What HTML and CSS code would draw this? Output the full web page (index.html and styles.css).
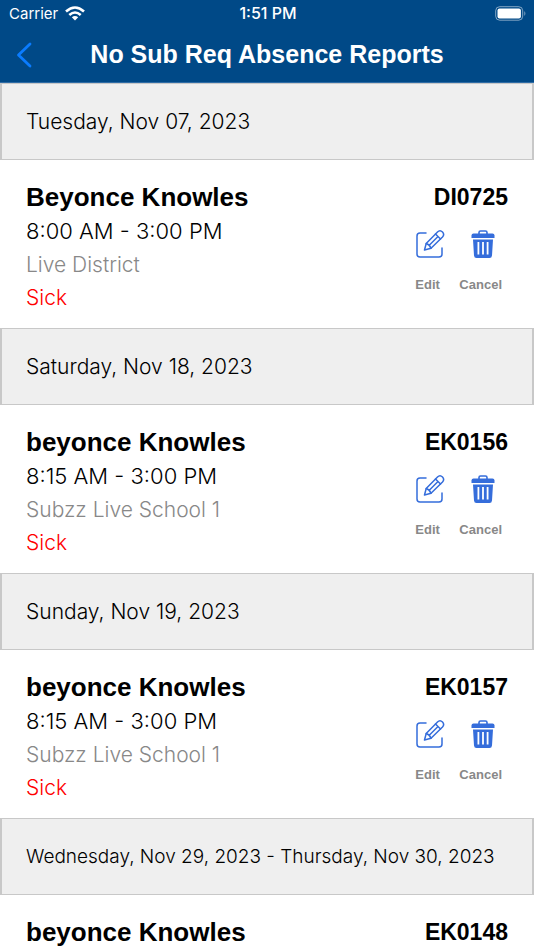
FILE: index.html
```html
<!DOCTYPE html>
<html lang="en">
<head>
<meta charset="utf-8">
<meta name="viewport" content="width=device-width, initial-scale=1">
<title>No Sub Req Absence Reports</title>
<link rel="stylesheet" href="styles.css">
</head>
<body>
<svg class="defs" aria-hidden="true">
  <symbol id="edit" viewBox="0 0 30 30">
    <g fill="none" stroke="currentColor" stroke-width="1.5" stroke-linecap="round" stroke-linejoin="round">
      <path d="M11 4H5Q2 4 2 7V25Q2 28 5 28H24Q27 28 27 25V19"/>
      <path d="M9.500 21L11.200 14.500L22.500 3Q25 .500 27.500 3Q29.800 5.500 27.500 8L16 19.300Z"/>
      <path d="M11.200 14.500Q14.500 15.500 16 19.300M20.500 5L25.500 10M14 16.500L22.500 8"/>
    </g>
  </symbol>
  <symbol id="trash" viewBox="-4 0 28 28">
    <path fill="none" stroke="currentColor" stroke-width="1.600" d="M8 4.500V2.500Q8 1 9.500 1H14.500Q16 1 16 2.500V4.500"/>
    <path fill="currentColor" d="M2.500 3.500H21.500Q23.500 3.500 23.500 5.500V8H.500V5.500Q.500 3.500 2.500 3.500Z"/>
    <path fill="currentColor" fill-rule="evenodd" d="M2 9.500H22L21 25.500Q20.800 28 18.500 28H5.500Q3.200 28 3 25.500ZM6.500 12V24.500H8.300V12ZM11.100 12V24.500H12.900V12ZM15.700 12V24.500H17.500V12Z"/>
  </symbol>
</svg>
<header class="top">
  <div class="status">
    <span class="carrier">Carrier
      <svg class="wifi" viewBox="0 0 20 15" aria-hidden="true"><g fill="none" stroke="#fff" stroke-width="2.600"><path d="M1 5.500Q10-2.500 19 5.500"/><path d="M4.300 9Q10 4 15.700 9"/></g><path fill="#fff" d="M6.800 11.300Q10 8.700 13.200 11.300L10 14.500Z"/></svg>
    </span>
    <span class="clock">1:51 PM</span>
    <svg class="battery" viewBox="0 0 32 15" aria-hidden="true"><rect x=".7" y=".7" width="27" height="13.500" rx="4" fill="none" stroke="#fff" stroke-opacity=".5"/><rect x="2.500" y="2.500" width="23.400" height="10" rx="2" fill="#fff"/><path d="M29.300 5Q31.500 7.500 29.300 10Z" fill="#fff" fill-opacity=".5"/></svg>
  </div>
  <div class="nav">
    <button class="back" type="button" aria-label="Back"><svg viewBox="0 0 16 26" aria-hidden="true"><path d="M14 2L2.500 13L14 24" fill="none" stroke="currentColor" stroke-width="2.800" stroke-linecap="round" stroke-linejoin="round"/></svg></button>
    <h1>No Sub Req Absence Reports</h1>
  </div>
</header>
<main>
  <section>
    <h2>Tuesday, Nov 07, 2023</h2>
    <article>
      <div class="info"><h3>Beyonce Knowles</h3><p class="time">8:00 AM - 3:00 PM</p><p class="place">Live District</p><p class="reason">Sick</p></div>
      <div class="side"><strong>DI0725</strong><div class="actions"><button type="button"><svg class="edit"><use href="#edit"/></svg>Edit</button><button type="button"><svg class="trash"><use href="#trash"/></svg>Cancel</button></div></div>
    </article>
  </section>
  <section>
    <h2>Saturday, Nov 18, 2023</h2>
    <article>
      <div class="info"><h3>beyonce Knowles</h3><p class="time">8:15 AM - 3:00 PM</p><p class="place">Subzz Live School 1</p><p class="reason">Sick</p></div>
      <div class="side"><strong>EK0156</strong><div class="actions"><button type="button"><svg class="edit"><use href="#edit"/></svg>Edit</button><button type="button"><svg class="trash"><use href="#trash"/></svg>Cancel</button></div></div>
    </article>
  </section>
  <section>
    <h2>Sunday, Nov 19, 2023</h2>
    <article>
      <div class="info"><h3>beyonce Knowles</h3><p class="time">8:15 AM - 3:00 PM</p><p class="place">Subzz Live School 1</p><p class="reason">Sick</p></div>
      <div class="side"><strong>EK0157</strong><div class="actions"><button type="button"><svg class="edit"><use href="#edit"/></svg>Edit</button><button type="button"><svg class="trash"><use href="#trash"/></svg>Cancel</button></div></div>
    </article>
  </section>
  <section>
    <h2 class="range">Wednesday, Nov 29, 2023 - Thursday, Nov 30, 2023</h2>
    <article>
      <div class="info"><h3>beyonce Knowles</h3></div>
      <div class="side"><strong>EK0148</strong></div>
    </article>
  </section>
</main>
</body>
</html>
```
FILE: styles.css
```css
* { box-sizing: border-box; }
html, body { height: 100%; }
body {
  margin: 0;
  display: flex;
  flex-direction: column;
  overflow: hidden;
  background: #fff;
  color: #000;
  font-family: "Liberation Sans", Arial, sans-serif;
}
h1, h2, h3, p { margin: 0; }
button { border: 0; padding: 0; background: none; font: inherit; cursor: pointer; }
svg { display: block; }
.defs { position: absolute; width: 0; height: 0; }

.top {
  flex: none;
  background: #004987;
  color: #fff;
  border-bottom: 1px solid #2f6ca5;
}
.status {
  display: grid;
  grid-template-columns: 1fr auto 1fr;
  align-items: center;
  height: 27px;
  padding: 0 7px 0 9px;
  font: 400 15px/27px Inter, sans-serif;
}
.carrier { display: flex; align-items: center; gap: 7px; }
.clock { font-size: 16px; font-weight: 500; }
.wifi { width: 20px; height: 15px; }
.battery { width: 32px; height: 15px; justify-self: end; }
.nav {
  display: grid;
  grid-template-columns: 48px 1fr 48px;
  align-items: center;
  height: 55px;
}
.back { padding-left: 16px; color: #0a7cff; }
.back svg { width: 16px; height: 26px; }
h1 { text-align: center; font-size: 25px; line-height: 55px; white-space: nowrap; }

main { flex: 1; min-height: 0; overflow: hidden; }
h2 {
  padding: 0 24px;
  border: 1px solid #c8c8c8;
  border-width: 1px 2px;
  background: #efefef;
  font: 300 21px/75px Inter, sans-serif;
  white-space: nowrap;
}
.range { font-size: 19px; }
article {
  display: flex;
  justify-content: space-between;
  padding: 19px 26px 14px;
}
h3 { font-size: 26px; line-height: 36px; }
p { font: 300 21px/33px Inter, "Liberation Sans", sans-serif; }
.time { font-size: 22px; }
.place { color: #888; }
.reason { color: #f00; }
.side { display: flex; flex-direction: column; align-items: flex-end; }
.side strong { font-size: 23px; line-height: 36px; }
.actions { display: flex; gap: 20px; padding: 14px 6px 0 0; }
.actions button {
  display: flex;
  flex-direction: column;
  align-items: center;
  gap: 17px;
  color: #888;
  font-size: 13px;
  line-height: 18px;
  font-weight: 700;
}
.actions button:first-child { align-items: flex-start; width: 24px; }
.actions svg { flex: none; color: #356ddb; height: 30px; }
.edit { width: 30px; }
.trash { width: 28px; }
```
